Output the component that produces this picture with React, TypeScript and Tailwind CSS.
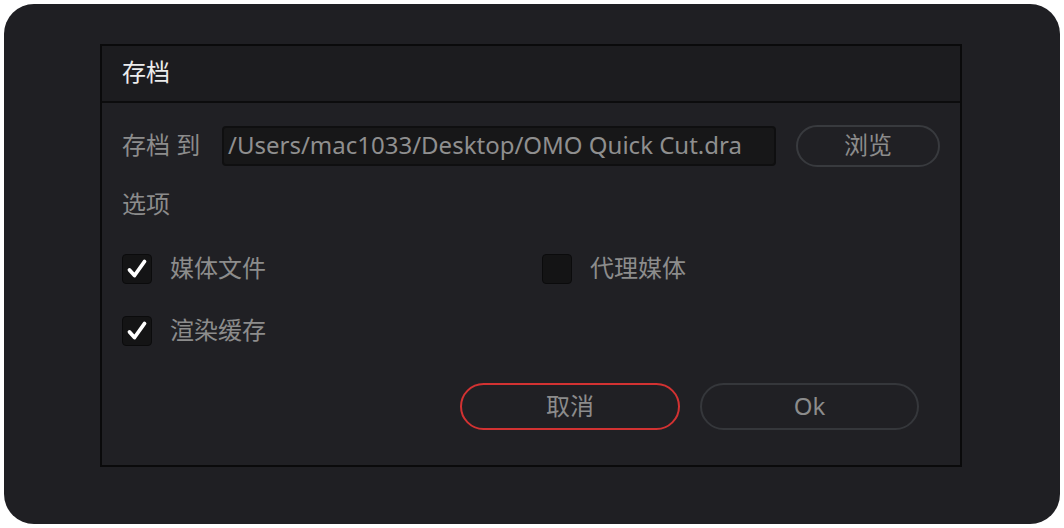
import React from "react";

const font = { fontFamily: '"Noto Sans", "Noto Sans CJK SC", sans-serif' };

function Check({ checked, label }: { checked: boolean; label: string }) {
  return (
    <div className="flex items-center h-[30px]">
      <div className="w-[30px] h-[30px] rounded-[4px] bg-[#141415] border border-[#0b0b0c] flex items-center justify-center">
        {checked && (
          <svg width="22" height="22" viewBox="0 0 22 22">
            <path d="M3.5 12 L8.5 17.5 L18.5 3.5" fill="none" stroke="#ffffff" strokeWidth="3.8" strokeLinecap="round" strokeLinejoin="round" />
          </svg>
        )}
      </div>
      <span className="ml-[18px] text-[24px] leading-none text-[#8c8c8c] -mt-[2px]">{label}</span>
    </div>
  );
}

export default function App() {
  return (
    <div className="w-[1064px] h-[528px] bg-white p-[4px]" style={font}>
      <div className="w-full h-full rounded-[30px] bg-[#1f1f23] pl-[96px] pt-[40px]">
        <div className="w-[862px] h-[423px] border-2 border-[#0a0a0b] bg-[#202024] flex flex-col">
          <div className="h-[57px] bg-[#1c1c1f] border-b-2 border-[#0c0c0d] flex items-center pl-[20px] pb-[4px]">
            <span className="text-[24px] leading-none text-[#ececec]">存档</span>
          </div>
          <div className="flex flex-col px-[20px]">
            <div className="flex items-center mt-[22px] h-[42px]">
              <span className="w-[100px] text-[24px] leading-none text-[#8c8c8c] -mt-[2px]">存档 到</span>
              <div className="w-[554px] h-[40px] rounded-[4px] bg-[#171718] border-2 border-[#0f0f10] flex items-center pl-[4px]">
                <span className="text-[24px] leading-none text-[#8f8f8f] whitespace-nowrap -mt-[2px]">/Users/mac1033/Desktop/OMO Quick Cut.dra</span>
              </div>
              <div className="ml-[20px] w-[144px] h-[42px] rounded-full border-2 border-[#383a3e] flex items-center justify-center">
                <span className="text-[24px] leading-none text-[#8c8c8c] -mt-[2px]">浏览</span>
              </div>
            </div>
            <div className="mt-[24px] h-[30px] flex items-center">
              <span className="text-[24px] leading-none text-[#8c8c8c] -mt-[4px]">选项</span>
            </div>
            <div className="mt-[33px] flex">
              <div className="w-[420px]">
                <Check checked label="媒体文件" />
              </div>
              <Check checked={false} label="代理媒体" />
            </div>
            <div className="mt-[32px] flex">
              <Check checked label="渲染缓存" />
            </div>
            <div className="mt-[37px] flex pl-[338px] gap-[20px]">
              <div className="w-[220px] h-[47px] rounded-full border-2 border-[#d23232] flex items-center justify-center">
                <span className="text-[24px] leading-none text-[#8c8c8c] -mt-[2px]">取消</span>
              </div>
              <div className="w-[219px] h-[47px] rounded-full border-2 border-[#35373b] flex items-center justify-center">
                <span className="text-[24px] leading-none text-[#8c8c8c] -mt-[2px]">Ok</span>
              </div>
            </div>
          </div>
        </div>
      </div>
    </div>
  );
}
